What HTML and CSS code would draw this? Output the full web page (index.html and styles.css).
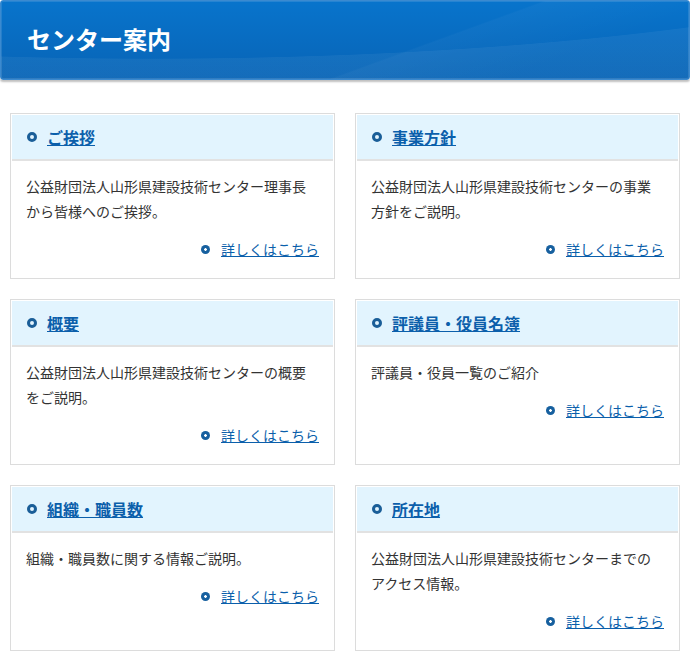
FILE: index.html
```html
<!DOCTYPE html>
<html lang="ja">
<head>
  <meta charset="UTF-8">
  <meta name="viewport" content="width=device-width, initial-scale=1.0">
  <title>センター案内</title>
  <link rel="stylesheet" href="styles.css">
</head>
<body>
  <div class="page-title">
    <h1>センター案内</h1>
  </div>

  <div class="guide-list">
    <div class="guide-box">
      <h2 class="guide-head"><span class="ring"></span><a href="#">ご挨拶</a></h2>
      <div class="guide-body">
        <p>公益財団法人山形県建設技術センター理事長から皆様へのご挨拶。</p>
        <p class="more"><span class="dot"></span><a href="#">詳しくはこちら</a></p>
      </div>
    </div>
    <div class="guide-box">
      <h2 class="guide-head"><span class="ring"></span><a href="#">事業方針</a></h2>
      <div class="guide-body">
        <p>公益財団法人山形県建設技術センターの事業方針をご説明。</p>
        <p class="more"><span class="dot"></span><a href="#">詳しくはこちら</a></p>
      </div>
    </div>
    <div class="guide-box">
      <h2 class="guide-head"><span class="ring"></span><a href="#">概要</a></h2>
      <div class="guide-body">
        <p>公益財団法人山形県建設技術センターの概要をご説明。</p>
        <p class="more"><span class="dot"></span><a href="#">詳しくはこちら</a></p>
      </div>
    </div>
    <div class="guide-box">
      <h2 class="guide-head"><span class="ring"></span><a href="#">評議員・役員名簿</a></h2>
      <div class="guide-body">
        <p>評議員・役員一覧のご紹介</p>
        <p class="more"><span class="dot"></span><a href="#">詳しくはこちら</a></p>
      </div>
    </div>
    <div class="guide-box">
      <h2 class="guide-head"><span class="ring"></span><a href="#">組織・職員数</a></h2>
      <div class="guide-body">
        <p>組織・職員数に関する情報ご説明。</p>
        <p class="more"><span class="dot"></span><a href="#">詳しくはこちら</a></p>
      </div>
    </div>
    <div class="guide-box">
      <h2 class="guide-head"><span class="ring"></span><a href="#">所在地</a></h2>
      <div class="guide-body">
        <p>公益財団法人山形県建設技術センターまでのアクセス情報。</p>
        <p class="more"><span class="dot"></span><a href="#">詳しくはこちら</a></p>
      </div>
    </div>
  </div>
</body>
</html>
```

FILE: styles.css
```css
* {
  margin: 0;
  padding: 0;
  box-sizing: border-box;
}

body {
  font-family: "Noto Sans CJK JP", "Noto Sans", sans-serif;
  font-size: 14px;
  color: #333;
  background: #fff;
}

a {
  color: #0b5fab;
}

/* page title bar */
.page-title {
  height: 80px;
  border: 1px solid #3b8ad0;
  border-radius: 3px;
  box-shadow: 0 2px 2px rgba(0, 0, 0, 0.25), inset 0 0 0 1px rgba(255, 255, 255, 0.12);
  background:
    radial-gradient(ellipse 900px 158px at 150px -100px, transparent 99.6%, rgba(255, 255, 255, 0.05) 100%),
    linear-gradient(160deg, transparent 60%, rgba(255, 255, 255, 0.03) 60.5%, transparent 80%),
    linear-gradient(to bottom, #0874cc, #0864b6);
  display: flex;
  align-items: center;
  padding: 0 0 2px 26px;
}

.page-title h1 {
  color: #fff;
  font-size: 24px;
  font-weight: bold;
  line-height: 1;
}

/* cards */
.guide-list {
  display: grid;
  grid-template-columns: 1fr 1fr;
  column-gap: 20px;
  row-gap: 20px;
  padding: 33px 10px 0;
}

.guide-box {
  border: 1px solid #dcdcdc;
  padding: 1px;
  display: flex;
  flex-direction: column;
}

.guide-head {
  background: #e2f4fe;
  border-bottom: 2px solid #e2e2e2;
  height: 46px;
  display: flex;
  align-items: center;
  padding-left: 15px;
  font-size: 16px;
  font-weight: bold;
  line-height: 1;
}

.guide-head a {
  color: #0b5fab;
  padding-bottom: 1px;
}

.ring {
  width: 10px;
  height: 10px;
  border: 3px solid #1a5e98;
  border-radius: 50%;
  margin-right: 10px;
  flex-shrink: 0;
}

.guide-body {
  padding: 13px 14px 15px 14px;
  flex: 1;
}

.guide-body p {
  line-height: 25px;
}

.more {
  margin-top: 13px;
  display: flex;
  justify-content: flex-end;
  align-items: center;
}

.dot {
  width: 9px;
  height: 9px;
  border-radius: 50%;
  background: radial-gradient(circle, #fff 0 1px, #17609f 1.6px);
  margin-right: 11px;
}
```
